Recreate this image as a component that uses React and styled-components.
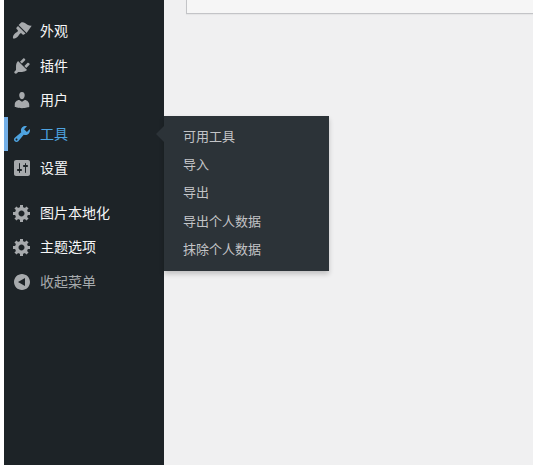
import React from 'react'
import styled, { createGlobalStyle } from 'styled-components'

const GlobalStyle = createGlobalStyle`
	html, body {
		margin: 0;
		padding: 0;
		height: 465px;
		overflow: hidden;
		background: #fff;
		font-family: "Noto Sans CJK SC", "Liberation Sans", sans-serif;
	}
`

const ICONS = {
	appearance: 'M14.6 12L6.6 4l2.6-2.4c.8-.7 2.6-.4 3.7.3 1.2.8 1.7 1.3 3.1 2 1.1.6 2.4 1 3.7.8zM13.6 12.6L6 5 4.6 6.5c-.39.39-.39 1.02 0 1.41l1.06 1.06c.39.39.39 1.03 0 1.42-.6.6-1.43 1.11-2.21 1.69-.35.26-.7.53-1.01.84-1.2 1.3-1.7 2.6-1.44 4.6 2.07.22 3.27-.43 4.61-1.76.31-.31.58-.66.84-1.02.57-.78 1.08-1.61 1.69-2.21.39-.39 1.02-.39 1.41 0l1 1c.4.4 1.02.4 1.41 0z',
	plugins: 'M13.11 4.36L9.87 7.6 8 5.73l3.24-3.24c.35-.34 1.05-.2 1.56.32.52.51.66 1.21.31 1.55zm-8 1.77l.91-1.12 9.01 9.01-1.19.84c-.71.71-2.63 1.16-3.82 1.16H6.14L4.9 17.26c-.59.59-1.54.59-2.12 0-.59-.58-.59-1.53 0-2.12l1.24-1.24v-3.88c0-1.13.4-3.19 1.09-3.89zm7.26 3.97l3.24-3.24c.34-.35 1.04-.21 1.55.31.52.51.66 1.21.31 1.55l-3.24 3.25z',
	users: 'M10 9.25c-2.27 0-2.73-3.44-2.73-3.44C7 4.02 7.82 2 9.97 2c2.16 0 2.98 2.02 2.71 3.81 0 0-.41 3.44-2.68 3.44zm0 2.57L12.72 10c2.39 0 4.52 2.33 4.52 4.53v2.49s-3.65 1.13-7.24 1.13c-3.65 0-7.24-1.13-7.24-1.13v-2.49c0-2.25 1.94-4.48 4.47-4.48z',
	tools: 'M16.68 9.77c-1.34 1.34-3.3 1.67-4.95.99l-5.41 6.52c-.99.99-2.59.99-3.58 0s-.99-2.59 0-3.57l6.52-5.42c-.68-1.65-.35-3.61.99-4.95 1.28-1.28 3.12-1.62 4.72-1.06l-2.89 2.89 2.82 2.82 2.86-2.87c.53 1.58.18 3.39-1.08 4.65zM3.81 16.21c.4.39 1.04.39 1.43 0 .4-.4.4-1.04 0-1.43-.39-.4-1.03-.4-1.43 0-.39.39-.39 1.03 0 1.43z',
	settings: 'M18 16V4c0-1.1-.9-2-2-2H4c-1.1 0-2 .9-2 2v12c0 1.1.9 2 2 2h12c1.1 0 2-.9 2-2zM8 11h1c.55 0 1 .45 1 1s-.45 1-1 1H8v1.5c0 .28-.22.5-.5.5s-.5-.22-.5-.5V13H6c-.55 0-1-.45-1-1s.45-1 1-1h1V5.5c0-.28.22-.5.5-.5s.5.22.5.5V11zm5-2h-1c-.55 0-1-.45-1-1s.45-1 1-1h1V5.5c0-.28.22-.5.5-.5s.5.22.5.5V7h1c.55 0 1 .45 1 1s-.45 1-1 1h-1v5.5c0 .28-.22.5-.5.5s-.5-.22-.5-.5V9z',
	generic: 'M18 12h-2.18c-.17.7-.44 1.35-.81 1.93l1.54 1.54-2.1 2.1-1.54-1.54c-.58.36-1.23.63-1.91.79V19H8v-2.18c-.68-.16-1.33-.43-1.91-.79l-1.54 1.54-2.12-2.12 1.54-1.54c-.36-.58-.63-1.23-.79-1.91H1V9.03h2.17c.16-.7.44-1.35.8-1.94L2.43 5.55l2.1-2.1 1.54 1.54c.58-.37 1.24-.64 1.93-.81V2h3v2.18c.68.16 1.33.43 1.91.79l1.54-1.54 2.12 2.12-1.54 1.54c.36.59.64 1.24.8 1.94H18V12zm-8.5 1.5c1.66 0 3-1.34 3-3s-1.34-3-3-3-3 1.34-3 3 1.34 3 3 3z',
	collapse: 'M18 10c0-4.42-3.58-8-8-8s-8 3.58-8 8 3.58 8 8 8 8-3.58 8-8zm-5 4l-7-4 7-4v8z',
}

const Icon = ({ name }) => (
	<IconSvg viewBox='0 0 20 20'>
		<path d={ICONS[name]} />
	</IconSvg>
)

const App = () => {
	return (
		<Page>
			<GlobalStyle />
			<Sidebar>
				<Menu>
					<MenuItem><Icon name='appearance' /><Label>外观</Label></MenuItem>
					<MenuItem><Icon name='plugins' /><Label>插件</Label></MenuItem>
					<MenuItem><Icon name='users' /><Label>用户</Label></MenuItem>
					<MenuItem $active>
						<Icon name='tools' /><Label>工具</Label>
						<Flyout>
							<FlyoutItem>可用工具</FlyoutItem>
							<FlyoutItem>导入</FlyoutItem>
							<FlyoutItem>导出</FlyoutItem>
							<FlyoutItem>导出个人数据</FlyoutItem>
							<FlyoutItem>抹除个人数据</FlyoutItem>
						</Flyout>
					</MenuItem>
					<MenuItem><Icon name='settings' /><Label>设置</Label></MenuItem>
					<Separator />
					<MenuItem><Icon name='generic' /><Label>图片本地化</Label></MenuItem>
					<MenuItem><Icon name='generic' /><Label>主题选项</Label></MenuItem>
					<MenuItem $muted><Icon name='collapse' /><Label>收起菜单</Label></MenuItem>
				</Menu>
			</Sidebar>
			<Content>
				<Card />
			</Content>
		</Page>
	)
}

const Page = styled.div`
	display: flex;
	width: 533px;
	height: 465px;
	padding-left: 4px;
	box-sizing: border-box;
	background: #fff;
`

const Sidebar = styled.nav`
	width: 160px;
	flex: none;
	background: #1d2327;
`

const Menu = styled.ul`
	list-style: none;
	margin: 0;
	padding: 14px 0 0;
`

const MenuItem = styled.li`
	position: relative;
	display: flex;
	align-items: center;
	height: 34px;
	box-sizing: border-box;
	padding-left: ${(p) => (p.$active ? '4px' : '8px')};
	border-left: ${(p) => (p.$active ? '4px solid #72aee6' : 'none')};
	margin-top: ${(p) => (p.$muted ? '1px' : '0')};
	font-size: 14px;
	line-height: 34px;
	color: ${(p) => (p.$active ? '#4ea3e0' : p.$muted ? '#a7aaad' : '#f6f6f7')};

	&:first-child {
		height: 35px;
		padding-bottom: 1px;
	}

	svg {
		fill: ${(p) => (p.$active ? '#4ea3e0' : '#a7aaad')};
	}
`

const IconSvg = styled.svg`
	width: 20px;
	height: 20px;
	flex: none;
	margin-right: 8px;
`

const Label = styled.span`
	margin-top: -2px;
`

const Separator = styled.li`
	height: 11px;
`

const Flyout = styled.ul`
	position: absolute;
	top: -1px;
	left: 156px;
	z-index: 2;
	width: 165px;
	margin: 0;
	padding: 6px 0 8px;
	box-sizing: border-box;
	list-style: none;
	background: #2c3338;
	box-shadow: 0 3px 5px rgba(0, 0, 0, 0.2);

	&::before {
		content: '';
		position: absolute;
		top: 10px;
		left: -16px;
		border: 8px solid transparent;
		border-right-color: #2c3338;
	}
`

const FlyoutItem = styled.li`
	height: 28.2px;
	padding-left: 19px;
	font-size: 13px;
	line-height: 28px;
	color: #c3c4c7;
`

const Content = styled.main`
	flex: 1;
	min-width: 0;
	background: #f0f0f1;
	padding-left: 22px;
`

const Card = styled.div`
	height: 14px;
	box-sizing: border-box;
	background: #f6f6f6;
	border-left: 1px solid #c3c4c7;
	border-bottom: 1px solid #c3c4c7;
	box-shadow: 0 1px 1px rgba(0, 0, 0, 0.04);
`

export default App
